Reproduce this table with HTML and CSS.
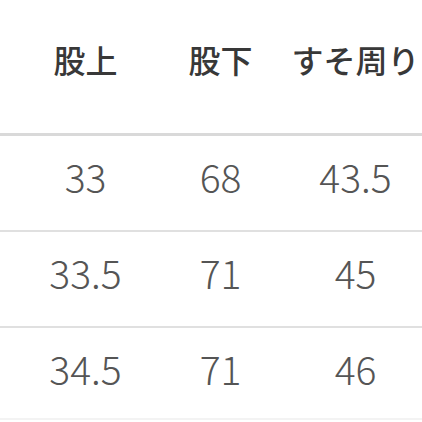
FILE: index.html
```html
<!DOCTYPE html>
<html lang="ja">
<head>
<meta charset="utf-8">
<link rel="stylesheet" href="styles.css">
</head>
<body>
<div class="table">
  <div class="row head">
    <div class="cell">股上</div>
    <div class="cell">股下</div>
    <div class="cell">すそ周り</div>
  </div>
  <div class="row">
    <div class="cell">33</div>
    <div class="cell">68</div>
    <div class="cell">43.5</div>
  </div>
  <div class="row">
    <div class="cell">33.5</div>
    <div class="cell">71</div>
    <div class="cell">45</div>
  </div>
  <div class="row last">
    <div class="cell">34.5</div>
    <div class="cell">71</div>
    <div class="cell">46</div>
  </div>
</div>
</body>
</html>
```

FILE: styles.css
```css
html, body {
  margin: 0;
  padding: 0;
  background: #ffffff;
}
body {
  width: 422px;
  height: 422px;
  overflow: hidden;
  font-family: "Noto Sans CJK JP", "Noto Sans", sans-serif;
}
.table {
  display: flex;
  flex-direction: column;
}
.row {
  display: grid;
  grid-template-columns: 18px 135px 135px 135px;
  height: 80px;
  align-items: center;
  border-bottom: 2px solid #e0e0e0;
  color: #555555;
  font-size: 39px;
  font-weight: 300;
  padding-bottom: 14px;
  box-sizing: content-box;
}
.row::before {
  content: "";
}
.row.head {
  height: 119px;
  padding-bottom: 14px;
  border-bottom: 3px solid #d9d9d9;
  color: #383838;
  font-size: 32px;
  font-weight: 500;
}
.row.last {
  height: 80px;
  padding-bottom: 10px;
  border-bottom-color: #f3f3f3;
}
.cell {
  text-align: center;
  white-space: nowrap;
  line-height: 1.2;
}
```
